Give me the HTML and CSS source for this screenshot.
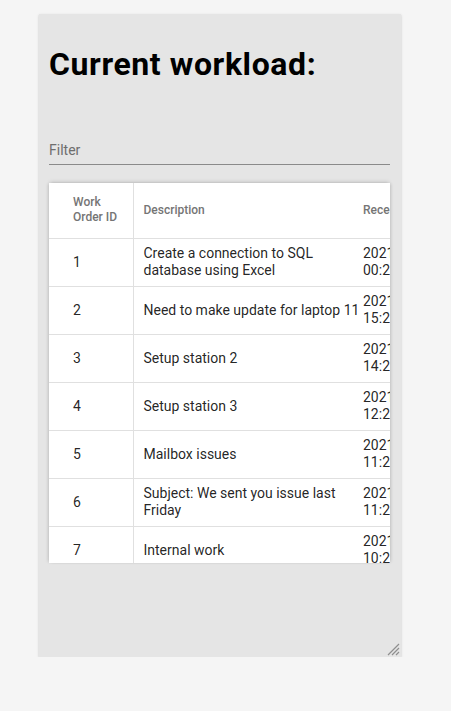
FILE: index.html
```html
<!DOCTYPE html>
<html lang="en">
<head>
<meta charset="utf-8">
<title>Current workload</title>
<link rel="stylesheet" href="styles.css">
</head>
<body>
<div class="card">
  <h1 class="title">Current workload:</h1>
  <div class="filter">
    <input class="filter-input" type="text" placeholder="Filter">
  </div>
  <div class="table-wrap">
    <table class="grid">
      <colgroup>
        <col class="c-id">
        <col class="c-desc">
        <col class="c-date">
      </colgroup>
      <thead>
        <tr>
          <th class="cell-id">Work Order ID</th>
          <th class="cell-desc">Description</th>
          <th class="cell-date">Received</th>
        </tr>
      </thead>
      <tbody>
        <tr><td class="cell-id">1</td><td class="cell-desc">Create a connection to SQL database using Excel</td><td class="cell-date">2021-06-14 00:23</td></tr>
        <tr><td class="cell-id">2</td><td class="cell-desc">Need to make update for laptop 11</td><td class="cell-date">2021-06-13 15:21</td></tr>
        <tr><td class="cell-id">3</td><td class="cell-desc">Setup station 2</td><td class="cell-date">2021-06-13 14:20</td></tr>
        <tr><td class="cell-id">4</td><td class="cell-desc">Setup station 3</td><td class="cell-date">2021-06-13 12:22</td></tr>
        <tr><td class="cell-id">5</td><td class="cell-desc">Mailbox issues</td><td class="cell-date">2021-06-13 11:24</td></tr>
        <tr><td class="cell-id">6</td><td class="cell-desc">Subject: We sent you issue last Friday</td><td class="cell-date">2021-06-13 11:20</td></tr>
        <tr><td class="cell-id">7</td><td class="cell-desc">Internal work</td><td class="cell-date">2021-06-13 10:25</td></tr>
        <tr><td class="cell-id">8</td><td class="cell-desc">Printer setup</td><td class="cell-date">2021-06-12 09:12</td></tr>
      </tbody>
    </table>
  </div>
  <svg class="grip" width="14" height="14" viewBox="0 0 14 14" aria-hidden="true">
    <path d="M13 2 L2 13 M13 6 L6 13 M13 10 L10 13" stroke="#8f8f8f" stroke-width="1.2" fill="none"/>
  </svg>
</div>
</body>
</html>
```

FILE: styles.css
```css
html, body {
  margin: 0;
  padding: 0;
}

body {
  background: #f5f5f5;
  font-family: Roboto, "Noto Sans", Arial, sans-serif;
  color: rgba(0, 0, 0, 0.87);
}

.card {
  position: relative;
  box-sizing: border-box;
  margin: 14px 0 0 39px;
  width: 362px;
  height: 643px;
  padding: 10px 11px 10px 10px;
  background: #e5e5e5;
  box-shadow: 0 2px 1px -1px rgba(0, 0, 0, 0.2), 0 1px 1px 0 rgba(0, 0, 0, 0.14), 0 1px 3px 0 rgba(0, 0, 0, 0.12);
  resize: both;
  overflow: hidden;
}

.card::-webkit-resizer {
  background: transparent;
}

.grip {
  position: absolute;
  right: 1px;
  bottom: 1px;
  display: block;
}

.title {
  margin: 22px 0 0;
  font-size: 32px;
  line-height: 37px;
  font-weight: 700;
  letter-spacing: 0.6px;
  color: #000;
}

.filter {
  margin-top: 59px;
}

.filter-input {
  display: block;
  box-sizing: content-box;
  width: 100%;
  height: 16px;
  margin: 0;
  padding: 0 0 6px;
  border: 0;
  border-bottom: 1px solid #8a8a8a;
  background: transparent;
  font-family: Roboto, "Noto Sans", Arial, sans-serif;
  font-size: 14px;
  line-height: 16px;
  color: rgba(0, 0, 0, 0.87);
  outline: none;
}

.filter-input::placeholder {
  color: #6e6e6e;
}

.table-wrap {
  margin-top: 18px;
  width: 341px;
  height: 380px;
  overflow: hidden;
  background: #fff;
  box-shadow: 0 -2px 4px -1px rgba(0, 0, 0, 0.14), 2px 0 3px -1px rgba(0, 0, 0, 0.12), -2px 0 3px -1px rgba(0, 0, 0, 0.12);
}

.grid {
  border-collapse: collapse;
  table-layout: fixed;
  width: 424px;
  background: #fff;
}

.c-id { width: 84px; }
.c-desc { width: 230px; }
.c-date { width: 110px; }

.grid th,
.grid td {
  box-sizing: border-box;
  border-bottom: 1px solid #e0e0e0;
  vertical-align: middle;
  text-align: left;
}

.grid th {
  height: 55px;
  font-size: 12px;
  line-height: 15px;
  font-weight: 500;
  color: #757575;
}

.grid td {
  height: 48px;
  font-size: 14px;
  line-height: 17px;
  font-weight: 400;
  color: rgba(0, 0, 0, 0.87);
}

.cell-id {
  padding: 0 10px 0 24px;
  border-right: 1px solid #e0e0e0;
}

.cell-desc {
  padding: 0 0 0 10px;
}

.cell-date {
  padding: 0 24px 0 0;
}
```
